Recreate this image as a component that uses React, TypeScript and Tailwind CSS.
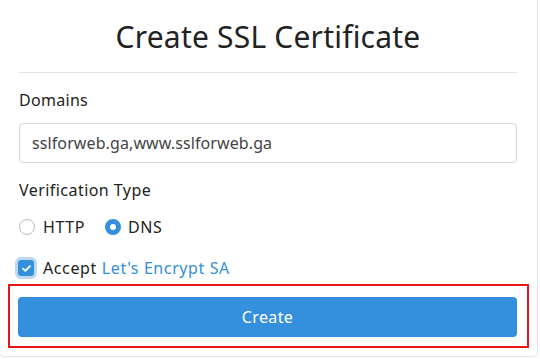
import React, { useState } from 'react';

export default function App() {
  const [domains, setDomains] = useState('sslforweb.ga,www.sslforweb.ga');
  const [method, setMethod] = useState<'http' | 'dns'>('dns');
  const [accepted, setAccepted] = useState(true);

  const font = { fontFamily: '"Noto Sans", "Open Sans", sans-serif' };

  return (
    <div className="w-[540px] h-[359px] bg-white overflow-hidden" style={font}>
      <div className="w-[539px] h-[357px] -ml-px border-x border-b border-[#e4e4e4] rounded-b-[5px] bg-white pl-[19px] pr-[20px]">
        {/* Header */}
        <div className="h-[72px] flex items-center justify-center">
          <h1 className="text-[30px] leading-none tracking-[0.2px] text-[#222] pt-[1px]">Create SSL Certificate</h1>
        </div>
        <div className="h-px bg-[#e2e2e2]" />

        {/* Domains */}
        <label className="block mt-[15px] text-[16px] leading-6 tracking-[0.3px] text-[#222]">Domains</label>
        <input
          className="mt-[11px] w-full h-[40px] px-[12px] rounded-[4px] border border-[#d4d7dc] text-[16px] tracking-[0.1px] text-[#444] outline-none"
          value={domains}
          onChange={(e) => setDomains(e.target.value)}
        />

        {/* Verification type */}
        <div className="mt-[15px] text-[16px] leading-6 tracking-[0.45px] text-[#222]">Verification Type</div>
        <div className="mt-[13px] h-6 flex items-center text-[16px] tracking-[0.6px] text-[#222]">
          <button onClick={() => setMethod('http')} className="flex items-center gap-[8px]">
            <span
              className={`w-4 h-4 rounded-full ${method === 'http' ? 'border-[5px] border-[#3490dc]' : 'border border-[#b9bcc2]'}`}
            />
            <span>HTTP</span>
          </button>
          <button onClick={() => setMethod('dns')} className="flex items-center gap-[7px] ml-[20px]">
            <span
              className={`w-4 h-4 rounded-full ${method === 'dns' ? 'border-[5px] border-[#3490dc]' : 'border border-[#b9bcc2]'}`}
            />
            <span>DNS</span>
          </button>
        </div>

        {/* Accept */}
        <div className="mt-[17px] h-6 flex items-center text-[16px] tracking-[0.6px] text-[#222]">
          <button
            onClick={() => setAccepted(!accepted)}
            className={`w-[16px] h-[16px] ml-[-1px] rounded-[3px] flex items-center justify-center ring-[3px] ring-[#bcd8f2] ${accepted ? 'bg-[#3490dc]' : 'bg-white border border-[#b9bcc2]'}`}
          >
            {accepted && (
              <svg width="9" height="7" viewBox="0 0 9 7" fill="none">
                <path d="M1 3.6 L3.4 5.8 L8 1.2" stroke="white" strokeWidth="1.8" strokeLinecap="round" strokeLinejoin="round" />
              </svg>
            )}
          </button>
          <span className="ml-[9px]">Accept</span>
          <a className="ml-[5px] text-[#3490dc]">Let's Encrypt SA</a>
        </div>

        {/* Submit */}
        <div className="mt-[4px] -ml-[11px] -mr-[12px] border-2 border-[#e8141c] pt-[11px] pb-[9px] pl-[8px] pr-[10px]">
          <button className="w-full h-[40px] rounded-[4px] bg-[#3490dc] text-white text-[16px] tracking-[0.4px]">Create</button>
        </div>
      </div>
    </div>
  );
}
